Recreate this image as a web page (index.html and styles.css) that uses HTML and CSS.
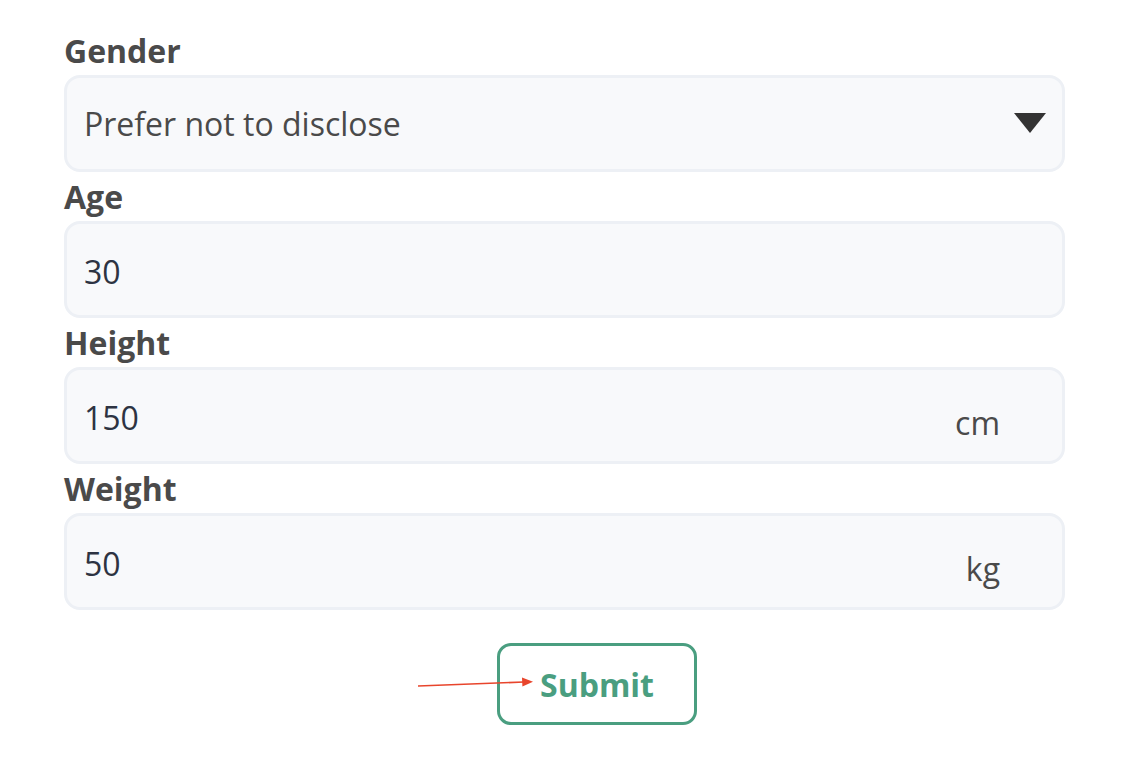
FILE: index.html
```html
<!DOCTYPE html>
<html>
<head>
<meta charset="utf-8">
<link rel="stylesheet" href="styles.css">
</head>
<body>
<form class="form">
  <div class="field">
    <label class="label">Gender</label>
    <div class="box select">
      <span class="text">Prefer not to disclose</span>
      <span class="caret"></span>
    </div>
  </div>
  <div class="field">
    <label class="label">Age</label>
    <div class="box">
      <span class="value">30</span>
    </div>
  </div>
  <div class="field">
    <label class="label">Height</label>
    <div class="box">
      <span class="value">150</span>
      <span class="unit">cm</span>
    </div>
  </div>
  <div class="field">
    <label class="label">Weight</label>
    <div class="box">
      <span class="value">50</span>
      <span class="unit">kg</span>
    </div>
  </div>
  <div class="actions">
    <div class="submit-wrap">
      <button type="button" class="submit">Submit</button>
      <svg class="arrow" width="130" height="20" viewBox="0 0 130 20">
        <line x1="2" y1="11" x2="108" y2="7" stroke="#e8452c" stroke-width="1.6"/>
        <polygon points="117,6.7 106,2.5 106.4,11.5" fill="#e8452c"/>
      </svg>
    </div>
  </div>
</form>
</body>
</html>
```
FILE: styles.css
```css
html, body {
  margin: 0;
  padding: 0;
  background: #ffffff;
}
body {
  font-family: "Open Sans", "Noto Sans", sans-serif;
}
.form {
  width: 1001px;
  margin-left: 64px;
  padding-top: 26px;
  display: flex;
  flex-direction: column;
}
.field {
  display: flex;
  flex-direction: column;
}
.label {
  font-weight: 700;
  font-size: 32px;
  line-height: 49px;
  color: #4a4a4a;
  height: 49px;
}
.box {
  box-sizing: border-box;
  height: 97px;
  border: 3px solid #edf0f5;
  border-radius: 16px;
  background: #f8f9fb;
  display: flex;
  align-items: center;
  padding: 0 62px 0 17px;
  position: relative;
}
.select .text {
  font-size: 32px;
  color: #4a4a4a;
  margin-top: 0;
}
.caret {
  position: absolute;
  right: 16px;
  top: 35px;
  width: 0;
  height: 0;
  border-left: 16px solid transparent;
  border-right: 16px solid transparent;
  border-top: 20px solid #333333;
}
.value {
  font-size: 32px;
  color: #2d3342;
  margin-top: 4px;
  flex: 1;
}
.unit {
  font-size: 32px;
  color: #4a4a4a;
  margin-top: 14px;
}
.actions {
  display: flex;
  padding-top: 33px;
  padding-left: 433px;
}
.submit-wrap {
  position: relative;
}
.submit {
  box-sizing: border-box;
  width: 200px;
  height: 82px;
  border: 3px solid #4a9e80;
  border-radius: 14px;
  background: #ffffff;
  color: #4a9e80;
  font-family: "Open Sans", "Noto Sans", sans-serif;
  font-weight: 700;
  font-size: 32px;
  padding: 0;
  display: block;
}
.arrow {
  position: absolute;
  left: -81px;
  top: 32px;
}
```
